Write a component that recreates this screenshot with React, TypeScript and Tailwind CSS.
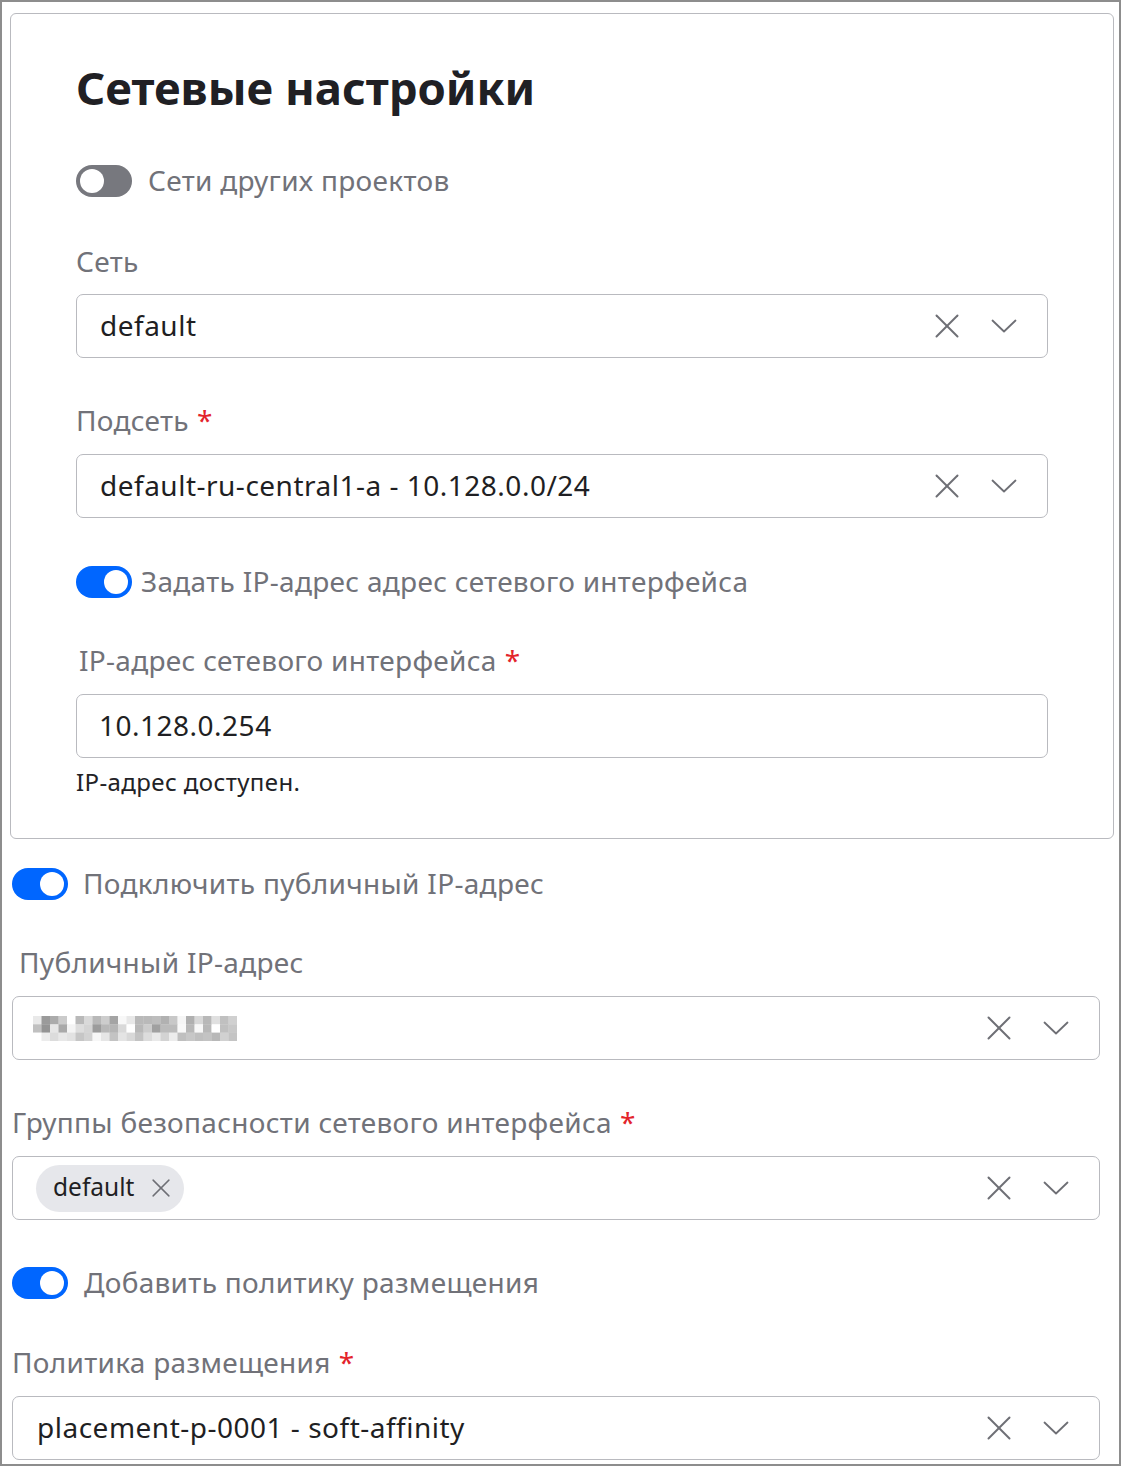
import React from "react";

const FONT = { fontFamily: '"Noto Sans", "Open Sans", sans-serif' };

function XIcon({ size = 24 }: { size?: number }) {
  return (
    <svg width={size} height={size} viewBox="0 0 24 24" fill="none" stroke="#6e6f75" strokeWidth="2" strokeLinecap="round">
      <line x1="1.5" y1="1.5" x2="22.5" y2="22.5" />
      <line x1="22.5" y1="1.5" x2="1.5" y2="22.5" />
    </svg>
  );
}

function Chevron() {
  return (
    <svg width="26" height="14" viewBox="0 0 26 14" fill="none" stroke="#6e6f75" strokeWidth="1.8" strokeLinecap="round" strokeLinejoin="round">
      <polyline points="1.5,1.5 13,12.5 24.5,1.5" />
    </svg>
  );
}

function Toggle({ on }: { on: boolean }) {
  return (
    <div
      className={
        "w-[56px] h-[32px] rounded-full flex items-center px-[4px] shrink-0 " +
        (on ? "bg-[#0066ff] justify-end" : "bg-[#77787e] justify-start")
      }
    >
      <div className="w-[24px] h-[24px] rounded-full bg-white" />
    </div>
  );
}

function ToggleRow({ on, text, gap }: { on: boolean; text: string; gap: string }) {
  return (
    <div className={"flex items-center h-[32px] " + gap}>
      <Toggle on={on} />
      <span className="text-[28px] tracking-[0.3px] leading-[32px] pb-[2px] text-[#717279]">{text}</span>
    </div>
  );
}

function Label({ text, required, indent = "" }: { text: string; required?: boolean; indent?: string }) {
  return (
    <div className={"h-[34px] flex items-center text-[28px] tracking-[0.3px] leading-[34px] pb-[2px] text-[#717279] " + indent}>
      <span>{text}</span>
      {required && <span className="text-[#e3242b] ml-[8px]">*</span>}
    </div>
  );
}

function SelectBox({ children, pl = "pl-[23px]" }: { children: React.ReactNode; pl?: string }) {
  return (
    <div className={"h-[64px] border border-[#b9babf] rounded-[7px] flex items-center pr-[30px] bg-white " + pl}>
      <div className="flex-1 flex items-center min-w-0">{children}</div>
      <div className="flex items-center gap-[32px]">
        <XIcon />
        <Chevron />
      </div>
    </div>
  );
}

function Mosaic() {
  const grays = [
    "e9", "9a", "ab", "cb", "ff", "b9", "d9", "b8", "cd", "a4", "f8", "e8", "b9", "b9", "bd", "b1", "c8", "f6", "b0", "d8", "b8", "e0", "c0", "d0",
    "c0", "94", "e6", "a9", "f4", "dd", "d4", "9c", "b8", "b5", "d9", "ff", "b8", "cc", "a0", "bb", "bb", "f9", "b8", "f8", "b8", "ff", "c0", "c8",
    "ff", "ec", "dc", "e8", "e2", "c6", "d2", "f7", "e6", "c3", "e4", "d8", "c3", "dc", "e9", "d3", "ec", "bf", "c7", "bf", "c3", "b8", "d1", "c4",
  ];
  const cw = 8.5;
  const ch = 8.3;
  return (
    <svg width={204} height={25} viewBox="0 0 204 25">
      {grays.map((g, i) => {
        const r = Math.floor(i / 24);
        const c = i % 24;
        return <rect key={i} x={c * cw} y={r * ch} width={cw + 0.3} height={ch + 0.3} fill={"#" + g + g + g} />;
      })}
    </svg>
  );
}

const VALUE = "text-[28px] tracking-[0.5px] text-[#1f1f23] leading-[34px] pb-[3px]";

export default function App() {
  return (
    <div style={FONT} className="w-[1121px] h-[1466px] bg-white border-2 border-[#8d8d8d] pt-[11px] overflow-hidden">
      {/* Card */}
      <div className="ml-[8px] w-[1104px] border border-[#b9babf] rounded-[6px] pl-[65px] pr-[65px] pt-[44px] pb-[41px] flex flex-col">
        <h1 className="text-[45.5px] leading-[58px] pb-[2px] h-[58px] font-bold text-[#202024]">Сетевые настройки</h1>
        <div className="mt-[49px]">
          <ToggleRow on={false} text="Сети других проектов" gap="gap-[16px]" />
        </div>
        <div className="mt-[48px]">
          <Label text="Сеть" />
        </div>
        <div className="mt-[15px]">
          <SelectBox>
            <span className={VALUE}>default</span>
          </SelectBox>
        </div>
        <div className="mt-[46px]">
          <Label text="Подсеть" required />
        </div>
        <div className="mt-[16px]">
          <SelectBox>
            <span className={VALUE}>default-ru-central1-a - 10.128.0.0/24</span>
          </SelectBox>
        </div>
        <div className="mt-[48px]">
          <ToggleRow on={true} text="Задать IP-адрес адрес сетевого интерфейса" gap="gap-[9px]" />
        </div>
        <div className="mt-[46px]">
          <Label text="IP-адрес сетевого интерфейса" required indent="pl-[3px]" />
        </div>
        <div className="mt-[16px]">
          <div className="h-[64px] border border-[#b9babf] rounded-[7px] flex items-center pl-[22px]">
            <span className={VALUE}>10.128.0.254</span>
          </div>
        </div>
        <div className="mt-[9px] h-[30px] flex items-center text-[24px] tracking-[0.4px] pb-[1px] text-[#222226]">IP-адрес доступен.</div>
      </div>

      {/* Outside */}
      <div className="pl-[10px] pr-[19px] flex flex-col">
        <div className="mt-[29px]">
          <ToggleRow on={true} text="Подключить публичный IP-адрес" gap="gap-[15px]" />
        </div>
        <div className="mt-[46px]">
          <Label text="Публичный IP-адрес" indent="pl-[7px]" />
        </div>
        <div className="mt-[16px]">
          <SelectBox pl="pl-[20px]">
            <Mosaic />
          </SelectBox>
        </div>
        <div className="mt-[46px]">
          <Label text="Группы безопасности сетевого интерфейса" required />
        </div>
        <div className="mt-[16px]">
          <SelectBox pl="pl-[23px]">
            <div className="h-[47px] rounded-full bg-[#e6e7eb] flex items-center pl-[17px] pr-[14px] gap-[18px]">
              <span className="text-[24.5px] text-[#1f1f23] pb-[2px]">default</span>
              <XIcon size={18} />
            </div>
          </SelectBox>
        </div>
        <div className="mt-[47px]">
          <ToggleRow on={true} text="Добавить политику размещения" gap="gap-[16px]" />
        </div>
        <div className="mt-[47px]">
          <Label text="Политика размещения" required />
        </div>
        <div className="mt-[16px]">
          <SelectBox pl="pl-[24px]">
            <span className={VALUE}>placement-p-0001 - soft-affinity</span>
          </SelectBox>
        </div>
      </div>
    </div>
  );
}
